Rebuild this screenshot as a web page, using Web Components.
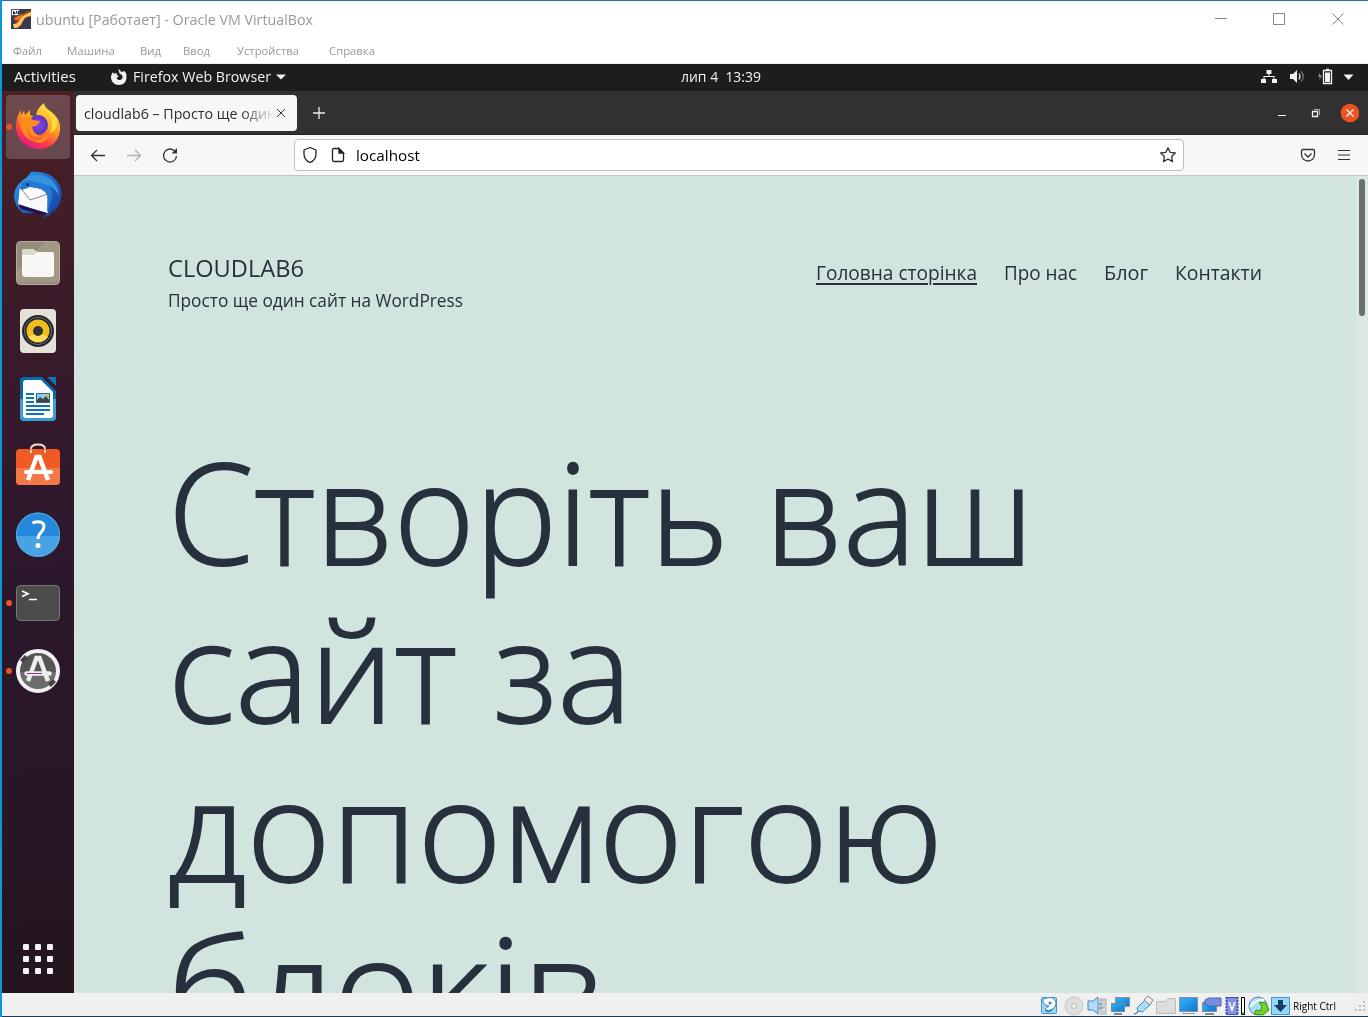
<!DOCTYPE html>
<html lang="uk"><head><meta charset="utf-8"><title>ubuntu – Oracle VM VirtualBox</title>
<style>
html,body{margin:0;height:100%;overflow:hidden}
body{font-family:"Open Sans","Noto Sans","Liberation Sans",sans-serif}
</style></head><body>
<vm-window></vm-window>
<script>
const sheet = (host, html) => { host.attachShadow({mode:'open'}).innerHTML = html; };

/* A single line of text set to an exact advance width. */
class FitText extends HTMLElement {
  connectedCallback(){
    if (this.shadowRoot) return;
    const w = +this.getAttribute('w');
    sheet(this, `<style>:host{display:block;flex:none;width:${w}px;white-space:nowrap}span{display:inline-block;transform-origin:0 50%;text-decoration:inherit}</style><span><slot></slot></span>`);
    const s = this.shadowRoot.querySelector('span');
    const fit = () => { s.style.transform = 'none'; const r = s.getBoundingClientRect().width; if (r) s.style.transform = `scaleX(${w / r})`; };
    fit(); requestAnimationFrame(fit);
  }
}
customElements.define('fit-text', FitText);

class VmTitle extends HTMLElement { connectedCallback(){ sheet(this, `<style>
:host{display:block;background:#fff;height:62px;border-top:1px solid #2a6da8;border-bottom:1px solid #eee;color:#999}
.t{display:flex;align-items:center;height:36px;padding-left:9px;font-size:15px}
.t fit-text{margin-left:5px;line-height:20px}
.w{margin-left:auto;margin-right:22px}
.m{display:flex;font-size:11.5px;line-height:16px;padding:6px 0 0 11px;color:#999}
</style>
<div class="t"><svg width="20" height="20" viewBox="0 0 20 20"><path d="M0 0h20v20H0z" fill="#343b4c"/><path d="M3 9h6l4-5 5-2h2v6h-3l-4 2-2 6-4 3H3l3-6-3-2z" fill="#c8440c"/><path d="M20 3v4q-5 0-7 3t-3 5q-2 4-7 4l-1-4q5 0 6-3t4-5 8-4z" fill="#ffc96b"/><path d="M9 6l3-1-2 5-4 1-3-2z" fill="#f07a1f"/><path d="M.5.500h8v6h-8z" fill="#fff" stroke="#50576a"/><path d="M2.500 2v3h1.500V3.500H2.500M5.500 2v2h2M7.500 2v3.500" fill="none" stroke="#222"/></svg>
<fit-text w="277">ubuntu [Работает] - Oracle VM VirtualBox</fit-text>
<svg class="w" width="132" height="14" viewBox="0 0 132 14" fill="none" stroke="#888"><path d="M1 6.500h12M59.500 1.500h11v11h-11zM118.500 1.500l11 11m0-11l-11 11"/></svg></div>
<div class="m"><fit-text w="29" style="margin-right:25px">Файл</fit-text><fit-text w="48" style="margin-right:25px">Машина</fit-text><fit-text w="21" style="margin-right:22px">Вид</fit-text><fit-text w="27" style="margin-right:27px">Ввод</fit-text><fit-text w="62" style="margin-right:30px">Устройства</fit-text><fit-text w="46">Справка</fit-text></div>`); } }
customElements.define('vm-title', VmTitle);

class GnomeBar extends HTMLElement { connectedCallback(){ sheet(this, `<style>
:host{display:grid;grid-template-columns:1fr 80px 1fr;align-items:center;height:27px;background:#1d1d1d;color:#f2f2f2;font-size:14px;line-height:20px;padding-bottom:1px;box-sizing:border-box}
div{display:flex;align-items:center;min-width:0}.l{padding-left:12px}.c{padding-left:36px;margin-right:-36px}.r{justify-content:flex-end;padding-right:13px}
</style>
<div class="l"><fit-text w="62">Activities</fit-text>
<svg style="margin-left:35px" width="16" height="16" viewBox="0 0 16 16"><path d="M7 0q3 1 3 3 3-1 4-.5Q16 5 15.500 8C15.500 13 12.500 16 8 16S0 12.500 0 8.500C0 6 1 4.500 2 3l1 2Q4 4 6 4L5.500 6 8 7 5.500 9q1 2.400 3.500 2 3-1 2.500-4Q11 5.500 8.500 4.500 8 2 7 0z" fill="#f2f2f2"/></svg>
<fit-text w="138" style="margin-left:6px">Firefox Web Browser</fit-text><svg style="margin-left:5px" width="10" height="6" viewBox="0 0 10 6"><path d="M0 .5h10L5 5.500z" fill="#f2f2f2"/></svg></div>
<div class="c"><fit-text w="80">лип 4&nbsp; 13:39</fit-text></div>
<div class="r"><svg width="94" height="18" viewBox="0 0 94 18" fill="#f2f2f2"><path d="M5.500 2h5v4h-2v2h5v3H16v4h-5v-4h1.500V9h-9v2H5v4H0v-4h2.500V8h5V6h-2z"/><path d="M29 6h3l4-4v13l-4-4h-3z"/><path d="M38 5.500q2 3 0 6" fill="none" stroke="#ddd" stroke-width="1.300"/><path d="M40 3.500q4.500 5 0 10" fill="none" stroke="#777" stroke-width="1.300"/><path d="M59 4l-2 5h2l-1 4 3-6h-2z" fill="#888"/><path d="M62.500 2.500h8v13h-8zM65 1.500h3" fill="none" stroke="#f2f2f2" stroke-width="1.300"/><path d="M64 4.500h5v9.500h-5z"/><path d="M82.500 6.500h10L87.500 12z"/></svg></div>`); } }
customElements.define('gnome-bar', GnomeBar);

const icons = {
firefox:`<defs><linearGradient id="a" x1=".8" y1="0" x2=".3" y2="1"><stop stop-color="#fff04a"/><stop offset=".45" stop-color="#ff9f20"/><stop offset=".75" stop-color="#ff3d45"/><stop offset="1" stop-color="#df168a"/></linearGradient><radialGradient id="b"><stop stop-color="#8d45e8"/><stop offset="1" stop-color="#5934bb"/></radialGradient></defs><path d="M30 0q0 4 6 8 9 6 10 15c1 14-9 23-21 23S2 37 2 24q0-10 5-17v5l3-4 1 4 5-5v5l6 2q0-8 8-14z" fill="url(#a)"/><circle cx="24" cy="22" r="10" fill="url(#b)"/><path d="M7 15q8-3 12 2l7 1q-2 5-8 6 2 8 9 9 6 0 9-5-1 10-10 12Q9 37 6 23q-1-4 1-8z" fill="#ff8d1c"/><path d="M14 25q2 13 18 8-5 6-13 4-7-4-5-12z" fill="#ff6230"/><path d="M30 0q2 9 6 13 4 8 0 17 8-3 7-12-1-6-7-10-6-3-6-8z" fill="#ffdb3e"/>`,
thunderbird:`<defs><linearGradient id="a" x2="1" y2="1"><stop stop-color="#31a0ea"/><stop offset=".5" stop-color="#1c66c9"/><stop offset="1" stop-color="#183d9b"/></linearGradient></defs><path d="M17 1q3-1 6 0 13 0 20 9 7 10 3 21-2 7-7 10l2-5-5 8-7 3 4-5H9Q0 35 0 24 1 13 12 7z" fill="url(#a)"/><path d="M6 14l27 5 1 23L4 34z" fill="#fafafc"/><path d="M5 15l11 14 18-6" fill="none" stroke="#888"/><path d="M5 17Q9 8 20 8l12 4q8 6 6 15l-4 13-1 1 1-16q-5-9-18-9l-8 3z" fill="#2179d2"/><path d="M9 10q8-9 21-5 13 4 15 19-7-11-20-12L14 9z" fill="#3594dd"/><circle cx="13.500" cy="13.500" r="1.500" fill="#102e60"/><path d="M4 33l28 9q-7 3-11 0L7 38z" fill="#211052"/>`,
files:`<rect x="2.500" y="2.500" width="43" height="43" rx="4" fill="#938b7b" stroke="#b5ad9c"/><path d="M3 31L31 3h12q2 0 2 2v38H3z" fill="#aaa18d" opacity=".6"/><path d="M8 12q0-2 2-2h9l4 3h15q2 0 2 2v20q0 3-3 3H11q-3 0-3-3z" fill="#f8f7f5"/><path d="M8 16V12q0-2 2-2h9l4 3-3 3z" fill="#ddd8ca"/>`,
music:`<rect x="6" y="2" width="36" height="44" rx="4" fill="#e5e1d8"/><circle cx="24" cy="24" r="16" fill="#26282d"/><circle cx="24" cy="24" r="13.500" fill="#1b1b1e" stroke="#657080"/><circle cx="24" cy="24" r="11.500" fill="#efbd1d"/><path d="M14 30q10-6 20 0-10 10-20 0" fill="#ffda58"/><circle cx="24" cy="24" r="5" fill="#303030"/>`,
writer:`<path d="M10 2h18l14 14v26q0 4-4 4H10q-4 0-4-4V6q0-4 4-4z" fill="#086aa7"/><path d="M6 24h36v18q0 4-4 4H10q-4 0-4-4z" fill="#3a9fd0"/><path d="M12 5h15l12 12v23q0 3-3 3H12q-3 0-3-3V8q0-3 3-3z" fill="#fff"/><path d="M33 2h9v9z" fill="#0f75b1"/><path d="M12 19h8m-8 4h8m-8 4h8m-8 4h24m-24 4h24m-24 4h18" stroke="#0876b5" stroke-width="2"/><path d="M22.500 18.500h13v9h-13z" fill="#8fcdf0" stroke="#1d6796"/><path d="M23 27v-2l3-3 3 2 3-3 3 4v2z" fill="#444"/><path d="M31 19h4v4z" fill="#f5be25"/>`,
software:`<path d="M17 10V6q0-4.500 7-4.500t7 4.500v4" fill="none" stroke="#f4dec0" stroke-width="2"/><rect x="2" y="6" width="44" height="36" rx="4" fill="#f05a27"/><path d="M2 25h44v13q0 4-4 4H6q-4 0-4-4z" fill="#f37848"/><path d="M17 10V7m14 3V7" stroke="#f4dec0" stroke-width="2"/><path d="M14 37l8.500-23h3L34 37" fill="none" stroke="#fff" stroke-width="4.500"/><path d="M12 29h25" stroke="#fff" stroke-width="4" stroke-linecap="round"/>`,
help:`<circle cx="24" cy="23.500" r="22" fill="#2488dc"/><path d="M2 25h44a22 21 0 0 1-44 0" fill="#48a3e5"/><circle cx="24" cy="23.500" r="21.500" fill="none" stroke="#5aacd9"/><path d="M18.500 12q8-3 11 1c3 7-6 8-5.500 15" fill="none" stroke="#fff" stroke-width="3"/><circle cx="24" cy="34.500" r="2.500" fill="#fff"/>`,
terminal:`<rect x="2.500" y="6.500" width="43" height="35" rx="4" fill="#4c4c4c" stroke="#777"/><path d="M8 12l6 2.700L8 17.500M15 20.500h8" fill="none" stroke="#fff" stroke-width="1.700"/>`,
updater:`<circle cx="24" cy="24" r="20" fill="#555"/><path d="M4 25h40a20 20 0 0 1-40 0" fill="#6c6c6c"/><circle cx="24" cy="24" r="20" fill="none" stroke="#f1f1f1" stroke-width="4"/><path d="M6 13l5-5 3 3-5 5zM42 35l-5 5-3-3 5-5z" fill="#444"/><path d="M14 34l8.500-23h3L34 34" fill="none" stroke="#eee" stroke-width="4.500"/><path d="M12.500 26.500h23" stroke="#eee" stroke-width="4.500" stroke-linecap="round"/><path d="M13 26.500h15" stroke="#8a3a82"/>`};
class DockItem extends HTMLElement { connectedCallback(){ sheet(this, `<style>
:host{display:grid;place-items:center;position:relative;width:64px;height:64px;border-radius:4px;flex:none}
:host([active]){background:#ffffff30}:host([running])::before{content:"";position:absolute;left:0;top:29px;width:6px;height:6px;border-radius:50%;background:#e95420}
</style><svg width="48" height="48" viewBox="0 0 48 48">${icons[this.getAttribute('icon')]}</svg>`); } }
customElements.define('dock-item', DockItem);

class UbuntuDock extends HTMLElement { connectedCallback(){ sheet(this, `<style>
:host{display:flex;flex-direction:column;gap:4px;align-items:center;padding-top:4px;box-sizing:border-box;background:linear-gradient(170deg,#4b2025,#3a1b2a 26%,#2d182d 50%,#24151f);overflow:hidden}
.g{margin-top:auto;margin-bottom:19px;flex:none}
</style>${Object.keys(icons).map(k=>`<dock-item icon="${k}" ${k=='firefox'?'active':''} ${/firefox|terminal|updater/.test(k)?'running':''}></dock-item>`).join('')}
<svg class="g" width="30" height="30" fill="#f2f2f2">${[0,12,24].map(y=>[0,12,24].map(x=>`<rect x="${x}" y="${y}" width="6" height="6" rx="1"/>`).join('')).join('')}</svg>`); } }
customElements.define('ubuntu-dock', UbuntuDock);

class BrowserChrome extends HTMLElement { connectedCallback(){ sheet(this, `<style>
:host{display:block;color:#2c2c2c}
.tabs{display:flex;align-items:center;height:44px;background:#333031;box-sizing:border-box;padding-left:2px;border-bottom:1px solid #222}
.tab{display:flex;align-items:center;background:#f7f7f7;width:221px;height:36px;box-sizing:border-box;padding-left:8px;border-radius:4px;font-size:14.500px}
.tx{width:192px;overflow:hidden;padding-top:1px;-webkit-mask-image:linear-gradient(90deg,#000 155px,transparent 192px)}
.wc{margin-left:auto;margin-right:9px}
.nav{display:flex;align-items:center;height:41px;background:#f7f7f7;border-bottom:1px solid #c6c6c6;box-sizing:border-box;padding-left:16px}
.url{display:flex;align-items:center;margin-left:115px;width:890px;height:32px;box-sizing:border-box;border:1px solid #bfbfc0;border-radius:4px;background:#fff;padding:0 7px;color:#000;font-size:15px}
.url .s{margin-left:auto}
</style>
<div class="tabs"><div class="tab"><div class="tx"><fit-text w="192">cloudlab6 – Просто ще один</fit-text></div><svg style="margin-left:0" width="10" height="10" stroke="#333" fill="none"><path d="M1 1l8 8m0-8L1 9"/></svg></div>
<svg style="margin-left:15px" width="13" height="13" stroke="#eee" stroke-width="1.300"><path d="M1 7h12M7 1v12"/></svg>
<svg class="wc" width="82" height="20" viewBox="0 0 82 20" fill="none" stroke="#f3f3f3"><path d="M1 12.500h8"/><path d="M35.500 8.500h5v5h-5z" stroke-width="1.300"/><path d="M37 6.500h5.500V12" stroke="#aaa"/><circle cx="73" cy="10" r="9.300" fill="#e95420" stroke="none"/><path d="M69.500 6.500l7 7m0-7l-7 7" stroke-width="1.400"/></svg></div>
<div class="nav"><svg width="89" height="18" viewBox="0 0 89 18" fill="none" stroke="#333" stroke-width="1.300"><path d="M15 9.500H1.500m5.500-5.500L1.500 9.500 7 15"/><path d="M37 9.500h13.500M45 4l5.500 5.500-5.500 5.500" stroke="#b0b0b0"/><path d="M85.500 6A6.500 6.500 0 1 0 86.500 10"/><path d="M87 2v5.500h-5.500z" fill="#333" stroke="none"/></svg>
<div class="url"><svg width="46" height="18" viewBox="0 0 46 18" fill="none" stroke="#222" stroke-width="1.300"><path d="M8 1.500l6 2.500v4q0 6-6 8.500Q2 14 2 8V4z" stroke-linejoin="round"/><path d="M32 2.500h5l4.500 4.500v7q0 1.500-1.500 1.500h-8q-1.500 0-1.500-1.500V4q0-1.500 1.500-1.500z"/><path d="M37 2.500V7h4.500z" fill="#222"/></svg><fit-text w="64" style="margin-left:8px">localhost</fit-text>
<svg class="s" width="16" height="16" viewBox="0 0 16 16" fill="none" stroke="#333" stroke-width="1.300" stroke-linejoin="round"><path d="M8 .8l2.200 4.600 5.100.6-3.800 3.500 1 5.100L8 12l-4.500 2.600 1-5.100L.7 6l5.100-.6z"/></svg></div>
<svg style="margin-left:116px" width="52" height="16" viewBox="0 0 52 16" fill="none" stroke="#333" stroke-width="1.300"><path d="M3 2.500h10q1.500 0 1.500 1.500V7.500a6.500 6.500 0 0 1-13 0V4Q1.500 2.500 3 2.500z"/><path d="M4.500 6.500L8 10l3.500-3.500"/><path d="M38 3.500h12M38 8h12M38 12.500h12" stroke-width="1.200"/></svg></div>`); } }
customElements.define('browser-chrome', BrowserChrome);

class SitePage extends HTMLElement { connectedCallback(){ sheet(this, `<style>
:host{display:flex;background:#d1e4dd;color:#28303d;overflow:hidden;min-height:0}
main{width:1282px;padding:76px 0 0 94px;box-sizing:border-box;flex:none}
header{display:flex;justify-content:space-between;margin-right:94px}
h1{font-weight:400;font-size:23.500px;line-height:32px;margin:0}
p{margin:0;font-size:17.500px;line-height:32px}
nav{display:flex;gap:27px;font-size:19.500px;line-height:28px;padding-top:7px}
.on{text-decoration:underline 2px;text-underline-offset:3px}
h2{margin:116px 0 0;font-weight:300;font-size:140px;line-height:158.400px;-webkit-text-stroke:1.800px #28303d}
aside{width:12px;background:#dbe8e2;box-sizing:border-box;padding:3px 3px 0}
i{display:block;width:6px;height:137px;border-radius:3px;background:#6b6c6e}
</style><main><header><div><h1><fit-text w="136">CLOUDLAB6</fit-text></h1><p><fit-text w="295">Просто ще один сайт на WordPress</fit-text></p></div>
<nav><fit-text w="161" class="on">Головна сторінка</fit-text><fit-text w="73">Про нас</fit-text><fit-text w="44">Блог</fit-text><fit-text w="87">Контакти</fit-text></nav></header>
<h2><fit-text w="866">Створіть ваш</fit-text><fit-text w="464">сайт за</fit-text><fit-text w="775">допомогою</fit-text><fit-text w="438">блоків</fit-text></h2></main><aside><i></i></aside>`); } }
customElements.define('site-page', SitePage);

class VmStatus extends HTMLElement { connectedCallback(){ sheet(this, `<style>
:host{display:flex;height:23px;background:#f0f0f0;border-bottom:1px solid #203850;align-items:center;font-size:10.500px;color:#000}
svg{display:block}fit-text{padding-top:2px}
</style><svg style="margin-left:1038px" width="250" height="22" viewBox="0 0 250 22">
<defs><linearGradient id="s" x2="1" y2="1"><stop stop-color="#36b2fb"/><stop offset="1" stop-color="#0878d4"/></linearGradient></defs>
<rect x="1.500" y="3.500" width="15" height="16" rx="1" fill="#9cd7f7" stroke="#4296ca"/><path d="M3 5q11-4 13 3 0 6-5 8l-4 2-2-3 4-3Q2 11 3 5z" fill="#fff" stroke="#3687bb"/><path d="M6 16q4 3 6-1" fill="none" stroke="#1670a8" stroke-width="1.500"/><circle cx="10" cy="9" r="1.500" fill="#3687bb"/>
<circle cx="34" cy="12" r="9" fill="#dedede" stroke="#c4c4c4"/><circle cx="34" cy="12" r="2.500" fill="#eee" stroke="#bbb"/>
<path d="M48 7h5l5-4v17l-5-4h-5z" fill="#b2dcfb" stroke="#4388ae"/><path d="M60 5h6v13h-6zM61 7h4m-4 3h4m-4 3h4M59 20h8" fill="#ddd" stroke="#aaa"/><path d="M59 10h3M59 14h4" stroke="#4388ae"/>
<path d="M75.500 3.500h14v9h-14z" fill="url(#s)" stroke="#8b8f94"/><path d="M71.500 9.500h13v8h-13z" fill="url(#s)" stroke="#7e868e"/><path d="M74 20h8" stroke="#888" stroke-width="2"/>
<path d="M94 20q3 0 4-3l-1-3 8-8 5 5-8 7-3-1q-2 3-5 3z" fill="#acdcff" stroke="#3e8bb8"/><path d="M104 6l4-4 5 4-3 5z" fill="#eee" stroke="#888"/>
<path d="M116.500 19.500v-12h9l3-3h7v15z" fill="#ddd" stroke="#bbb"/>
<path d="M139.500 3.500h18v14h-18z" fill="url(#s)" stroke="#8b8f94"/><path d="M142 19.500h13" stroke="#999"/>
<path d="M162.500 8.500h14v9h-14z" fill="url(#s)" stroke="#888"/><path d="M169 4h12v8h-12l-4-2V6z" fill="#788ce1" stroke="#4e61b2"/><path d="M165 20h9" stroke="#888" stroke-width="2"/>
<path d="M186 4h12v16h-12z" fill="#8292e8"/><path d="M186.500 3v18M197.500 3v18" stroke="#4655a8" stroke-width="2" stroke-dasharray="2 1"/><path d="M186 3.500h12M186 20.500h12" stroke="#4655a8"/><path d="M189 8l3 8 3-8" fill="none" stroke="#fff" stroke-width="1.600"/>
<path d="M201.500 3.500h3v17h-3z" fill="#fff" stroke="#000"/><path d="M202 18h2v2h-2z" fill="#20e020"/>
<circle cx="218" cy="12" r="9" fill="#a8ddf8" stroke="#458bb4"/><path d="M210 13q5-8 14-7" stroke="#fff" fill="none" stroke-width="2"/><path d="M219 8l7 1 3 7-6 5-9-1 2-4 4 1 2-4z" fill="#6fd22b" stroke="#3d9218"/>
<rect x="231.500" y="3.500" width="18" height="17" fill="#91d8fa" stroke="#3d9aca"/><path d="M238 6h5v5h4l-6.500 7L234 11h4z" fill="#153d67"/></svg>
<fit-text w="43" style="margin-left:3px">Right Ctrl</fit-text><svg style="margin-left:auto" width="14" height="16" fill="#bcbcbc"><path d="M9 4h2v2H9zM5 8h2v2H5zM9 8h2v2H9zM1 12h2v2H1zM5 12h2v2H5zM9 12h2v2H9z"/></svg>`); } }
customElements.define('vm-status', VmStatus);

class VmWindow extends HTMLElement { connectedCallback(){ sheet(this, `<style>
:host{display:flex;flex-direction:column;width:1368px;height:1017px;box-sizing:border-box;border-left:2px solid #0a98da;background:#fff;overflow:hidden}
.desk{display:flex;flex:1;min-height:0}ubuntu-dock{width:72px;flex:none}.ff{display:flex;flex-direction:column;flex:1;min-width:0}site-page{flex:1}
</style><vm-title></vm-title><gnome-bar></gnome-bar><div class="desk"><ubuntu-dock></ubuntu-dock><div class="ff"><browser-chrome></browser-chrome><site-page></site-page></div></div><vm-status></vm-status>`); } }
customElements.define('vm-window', VmWindow);
</script></body></html>
